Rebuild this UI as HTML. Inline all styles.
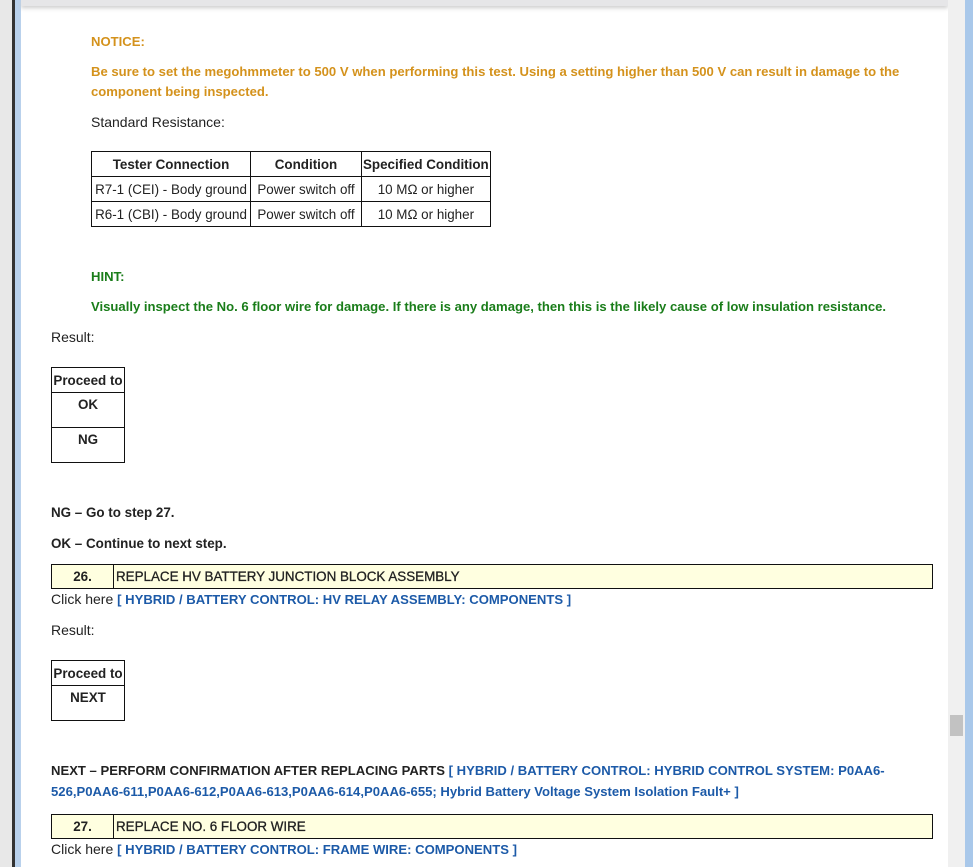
<!DOCTYPE html>
<html><head><meta charset="utf-8"><style>
body{margin:0;width:973px;height:867px;position:relative;overflow:hidden;background:#fff;font-family:"Liberation Sans",sans-serif;font-size:14px;color:#222}
.a{position:absolute;white-space:nowrap}
.o{color:#d4921c;font-weight:bold;font-size:13.1px}
.g{color:#1a7d1a;font-weight:bold;font-size:13.1px}
.b{color:#1c5aa8;font-weight:bold;font-size:13.1px}
.bd{font-weight:bold;font-size:13.4px}
table{border-collapse:collapse;position:absolute}
td{border:1px solid #111;padding:0 1px;font-size:13.4px;text-align:center;white-space:nowrap}
.step{position:absolute;left:51px;width:880px;height:23px;border:1px solid #111;background:#ffffe0;font-size:13.4px}
.step .n{position:absolute;left:0;top:0;width:61px;height:23px;border-right:1px solid #111;text-align:center;line-height:23px;font-weight:bold}
.step .t{position:absolute;left:64px;top:0;line-height:23px;-webkit-text-stroke:0.3px #222}
</style></head><body>
<div class="a" style="left:0;top:0;width:12px;height:867px;background:#e8e8e8"></div>
<div class="a" style="left:12px;top:0;width:3px;height:867px;background:#333"></div>
<div class="a" style="left:15px;top:0;width:6px;height:867px;background:#b9d1ec"></div>
<div class="a" style="left:21px;top:0;width:927px;height:6px;background:#e6e6e8;box-shadow:0 2px 4px #ccc"></div>
<div class="a" style="left:948px;top:0;width:17px;height:867px;background:#f0f0f0"></div>
<div class="a" style="left:950px;top:715px;width:13px;height:21px;background:#c2c2c2"></div>
<div class="a" style="left:965px;top:0;width:8px;height:867px;background:#a9c8ea"></div>

<div class="a o" style="left:91px;top:34px">NOTICE:</div>
<div class="a o" style="left:91px;top:64px">Be sure to set the megohmmeter to 500 V when performing this test. Using a setting higher than 500 V can result in damage to the</div>
<div class="a o" style="left:91px;top:84px">component being inspected.</div>
<div class="a" style="left:91px;top:114px">Standard Resistance:</div>
<table style="left:91px;top:151px">
<tr style="height:25px"><td style="width:156px;font-weight:bold">Tester Connection</td><td style="width:108px;font-weight:bold">Condition</td><td style="width:124px;font-weight:bold">Specified Condition</td></tr>
<tr style="height:25px"><td>R7-1 (CEI) - Body ground</td><td>Power switch off</td><td>10 MΩ or higher</td></tr>
<tr style="height:25px"><td>R6-1 (CBI) - Body ground</td><td>Power switch off</td><td>10 MΩ or higher</td></tr>
</table>
<div class="a g" style="left:91px;top:269px">HINT:</div>
<div class="a g" style="left:91px;top:299px">Visually inspect the No. 6 floor wire for damage. If there is any damage, then this is the likely cause of low insulation resistance.</div>
<div class="a" style="left:51px;top:329px">Result:</div>
<table style="left:51px;top:367px">
<tr style="height:25px"><td style="width:70px;font-weight:bold">Proceed to</td></tr>
<tr style="height:35px"><td style="font-weight:bold;vertical-align:top;padding-top:4px">OK</td></tr>
<tr style="height:35px"><td style="font-weight:bold;vertical-align:top;padding-top:4px">NG</td></tr>
</table>
<div class="a bd" style="left:51px;top:505px">NG – Go to step 27.</div>
<div class="a bd" style="left:51px;top:536px">OK – Continue to next step.</div>
<div class="step" style="top:564px"><div class="n">26.</div><div class="t">REPLACE HV BATTERY JUNCTION BLOCK ASSEMBLY</div></div>
<div class="a" style="left:51px;top:591px">Click here <span class="b">[ HYBRID / BATTERY CONTROL: HV RELAY ASSEMBLY: COMPONENTS ]</span></div>
<div class="a" style="left:51px;top:622px">Result:</div>
<table style="left:51px;top:660px">
<tr style="height:25px"><td style="width:70px;font-weight:bold">Proceed to</td></tr>
<tr style="height:35px"><td style="font-weight:bold;vertical-align:top;padding-top:4px">NEXT</td></tr>
</table>
<div class="a bd" style="left:51px;top:763px;font-size:13.1px">NEXT – PERFORM CONFIRMATION AFTER REPLACING PARTS <span class="b">[ HYBRID / BATTERY CONTROL: HYBRID CONTROL SYSTEM: P0AA6-</span></div>
<div class="a b" style="left:51px;top:784px">526,P0AA6-611,P0AA6-612,P0AA6-613,P0AA6-614,P0AA6-655; Hybrid Battery Voltage System Isolation Fault+ ]</div>
<div class="step" style="top:814px"><div class="n">27.</div><div class="t">REPLACE NO. 6 FLOOR WIRE</div></div>
<div class="a" style="left:51px;top:841px">Click here <span class="b">[ HYBRID / BATTERY CONTROL: FRAME WIRE: COMPONENTS ]</span></div>
</body></html>
